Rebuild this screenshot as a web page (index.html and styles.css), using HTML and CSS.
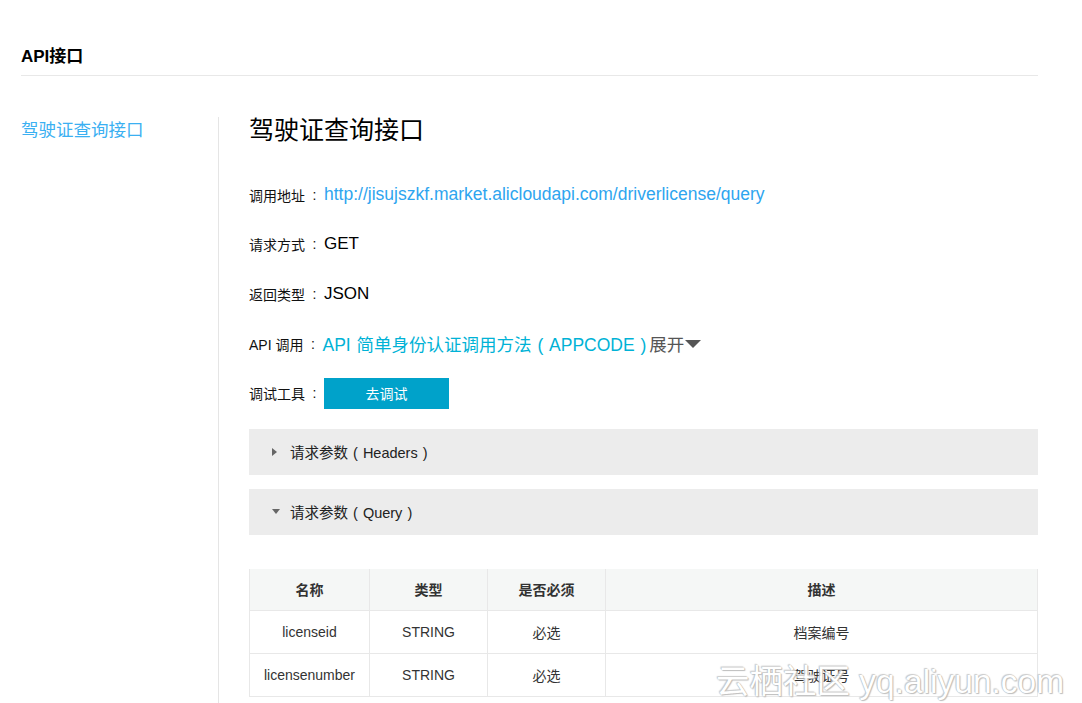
FILE: index.html
```html
<!DOCTYPE html>
<html lang="zh">
<head>
<meta charset="utf-8">
<title>API接口</title>
<link rel="stylesheet" href="styles.css">
</head>
<body>
<div class="page">
  <h2 class="page-title">API接口</h2>
  <div class="layout">
    <aside class="sidebar">
      <a class="side-link" href="#">驾驶证查询接口</a>
    </aside>
    <main class="main">
      <h1 class="api-title">驾驶证查询接口</h1>
      <div class="row"><span class="label">调用地址</span><span class="colon">:</span><span class="url">http://jisujszkf.market.alicloudapi.com/driverlicense/query</span></div>
      <div class="row"><span class="label">请求方式</span><span class="colon">:</span><span class="value">GET</span></div>
      <div class="row"><span class="label">返回类型</span><span class="colon">:</span><span class="value">JSON</span></div>
      <div class="row"><span class="label">API 调用</span><span class="colon">:</span><span class="api-link">API 简单身份认证调用方法 ( APPCODE )</span><span class="expand">展开</span><span class="caret"></span></div>
      <div class="row"><span class="label">调试工具</span><span class="colon">:</span><span class="btn">去调试</span></div>
      <div class="bar"><span class="tri-right"></span>请求参数 ( Headers )</div>
      <div class="bar bar-second"><span class="tri-down"></span>请求参数 ( Query )</div>
      <table class="params">
        <thead>
          <tr><th class="c1">名称</th><th class="c2">类型</th><th class="c3">是否必须</th><th>描述</th></tr>
        </thead>
        <tbody>
          <tr><td>licenseid</td><td>STRING</td><td>必选</td><td>档案编号</td></tr>
          <tr><td>licensenumber</td><td>STRING</td><td>必选</td><td>驾驶证号</td></tr>
        </tbody>
      </table>
    </main>
  </div>
  <div class="watermark">云栖社区 yq.aliyun.com</div>
</div>
</body>
</html>
```
FILE: styles.css
```css
html, body {
  margin: 0;
  padding: 0;
  background: #fff;
}
body {
  font-family: "Liberation Sans", "Noto Sans CJK SC", sans-serif;
  color: #000;
  height: 703px;
  overflow: hidden;
}
.page {
  position: relative;
  padding-left: 21px;
  width: 1017px;
}
.page-title {
  margin: 0;
  padding-top: 45px;
  height: 30px;
  line-height: 23px;
  font-size: 17px;
  font-weight: bold;
  border-bottom: 1px solid #e8e8e8;
}
.layout {
  display: flex;
  margin-top: 41px;
}
.sidebar {
  width: 197px;
  border-right: 1px solid #e5e5e5;
  min-height: 600px;
}
.side-link {
  display: block;
  font-size: 17.5px;
  line-height: 26px;
  color: #3bb0f2;
  text-decoration: none;
}
.main {
  flex: 1;
  padding-left: 30px;
}
.api-title {
  margin: 0;
  height: 53px;
  font-size: 25px;
  line-height: 26px;
  font-weight: normal;
}
.row {
  display: flex;
  align-items: center;
  height: 49.6px;
}
.label {
  font-size: 14px;
  color: #111;
}
.colon {
  display: inline-block;
  width: 19px;
  text-align: center;
  font-size: 14px;
  color: #111;
}
.url {
  font-size: 17.5px;
  color: #2ea5ef;
}
.value {
  font-size: 17px;
  color: #000;
}
.api-link {
  font-size: 17.5px;
  color: #00b2d6;
  word-spacing: 1px;
}
.expand {
  font-size: 17.5px;
  color: #555;
  margin-left: 3px;
}
.caret {
  width: 0;
  height: 0;
  border-left: 8px solid transparent;
  border-right: 8px solid transparent;
  border-top: 8px solid #555;
  margin-left: 1px;
}
.btn {
  display: inline-flex;
  align-items: center;
  justify-content: center;
  width: 125px;
  height: 31px;
  background: #00a2ca;
  color: #fff;
  font-size: 14px;
}
.bar {
  display: flex;
  align-items: center;
  height: 46px;
  margin-top: 11px;
  background: #ececec;
  font-size: 14.5px;
  color: #222;
  padding-left: 23px;
  word-spacing: 1px;
}
.bar-second {
  margin-top: 14px;
}
.tri-right {
  width: 0;
  height: 0;
  border-top: 4px solid transparent;
  border-bottom: 4px solid transparent;
  border-left: 5px solid #666;
  margin-right: 13px;
}
.tri-down {
  width: 0;
  height: 0;
  border-left: 4.5px solid transparent;
  border-right: 4.5px solid transparent;
  border-top: 5px solid #666;
  margin-right: 10px;
}
.params {
  margin-top: 34px;
  width: 789px;
  border-collapse: collapse;
  font-size: 14px;
  color: #333;
}
.params th, .params td {
  border: 1px solid #e8e8e8;
  text-align: center;
  padding: 0 6px;
}
.params th {
  background: #f5f7f6;
  height: 41px;
  font-weight: bold;
  border-top: none;
}
.params td {
  height: 42px;
}
.c1 { width: 107px; }
.c2 { width: 105px; }
.c3 { width: 105px; }
.watermark {
  position: absolute;
  left: 716px;
  top: 654px;
  font-size: 33.5px;
  color: #fff;
  white-space: nowrap;
  text-shadow: 0 0 1px #999, 1px 1px 1px #bbb, -1px -1px 1px #ccc;
  opacity: 0.9;
}
```
